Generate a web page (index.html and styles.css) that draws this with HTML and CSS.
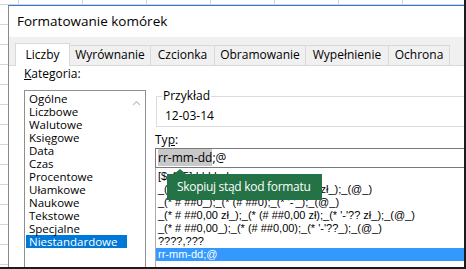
FILE: index.html
```html
<!DOCTYPE html>
<html lang="pl">
<head>
    <meta charset="UTF-8">
    <meta name="viewport" content="width=device-width, initial-scale=1.0">
    <title>Formatowanie komórek</title>
    <link rel="stylesheet" href="styles.css">
</head>
<body>
    <div class="screen">
        <div class="dialog">
            <div class="title">Formatowanie komórek</div>

            <!-- Zakładki -->
            <div class="tabs">
                <div class="tab tab-active tab-liczby">Liczby</div>
                <div class="tab tab-wyr">Wyrównanie</div>
                <div class="tab tab-czc">Czcionka</div>
                <div class="tab tab-obr">Obramowanie</div>
                <div class="tab tab-wyp">Wypełnienie</div>
                <div class="tab tab-och">Ochrona</div>
            </div>

            <div class="panel">
                <!-- Lista kategorii -->
                <div class="cat-col">
                    <div class="label"><u>K</u>ategoria:</div>
                    <div class="catlist">
                        <div class="cat-items">
                            <div class="cat">Ogólne</div>
                            <div class="cat">Liczbowe</div>
                            <div class="cat">Walutowe</div>
                            <div class="cat">Księgowe</div>
                            <div class="cat">Data</div>
                            <div class="cat">Czas</div>
                            <div class="cat">Procentowe</div>
                            <div class="cat">Ułamkowe</div>
                            <div class="cat">Naukowe</div>
                            <div class="cat">Tekstowe</div>
                            <div class="cat">Specjalne</div>
                            <div class="cat cat-selected">Niestandardowe</div>
                        </div>
                        <div class="scrollbar">
                            <svg class="scroll-up" width="9" height="6" viewBox="0 0 9 6">
                                <path d="M1 5 L4.5 1.5 L8 5" fill="none" stroke="#c2c2c2" stroke-width="1.2"/>
                            </svg>
                        </div>
                    </div>
                </div>

                <!-- Przykład, typ i lista formatów -->
                <div class="main-col">
                    <fieldset class="sample">
                        <legend>Przykład</legend>
                        <div class="sample-value">12-03-14</div>
                    </fieldset>
                    <div class="label label-typ">Ty<u>p</u>:</div>
                    <div class="type-input"><span class="text-sel">rr-mm-dd</span>;@</div>
                    <div class="fmt-list">
                        <div class="fmt">[$-415]dddd, d mmmm yyyy</div>
                        <div class="fmt">_(* # ##0 zł_);_(* (# ##0 zł);_(* '-' zł_);_(@_)</div>
                        <div class="fmt">_(* # ##0_);_(* (# ##0);_(* '-'_);_(@_)</div>
                        <div class="fmt">_(* # ##0,00 zł_);_(* (# ##0,00 zł);_(* '-'?? zł_);_(@_)</div>
                        <div class="fmt">_(* # ##0,00_);_(* (# ##0,00);_(* '-'??_);_(@_)</div>
                        <div class="fmt">????,???</div>
                        <div class="fmt fmt-selected">rr-mm-dd;@</div>

                        <!-- Podpowiedź -->
                        <div class="tip">Skopiuj stąd kod formatu</div>
                    </div>
                </div>
            </div>
        </div>
    </div>
</body>
</html>
```

FILE: styles.css
```css
/* Okno dialogowe Excela na tle arkusza */
body {
    margin: 0;
    padding: 0;
    font-family: "Open Sans", "Noto Sans", sans-serif;
    font-size: 12px;
    color: #000;
}
.screen {
    box-sizing: border-box;
    width: 466px;
    height: 269px;
    overflow: hidden;
    padding: 5px 0 0 8px;
    border-right: 2px solid #1c1c1c;
    border-bottom: 2px solid #1c1c1c;
    background-color: #fff;
    /* linie siatki arkusza */
    background-image:
        linear-gradient(to right, #d6d6d6 1px, transparent 1px),
        linear-gradient(to bottom, #d6d6d6 1px, transparent 1px);
    background-size: 64px 100%, 100% 20px;
    background-position: 18px 0, 0 4px;
}
.dialog {
    width: 520px;
    height: 300px;
    background-color: #fff;
    border-top: 1px solid #2b7bd6;
    border-left: 1px solid #8a8a8a;
}
.title {
    height: 31px;
    line-height: 31px;
    padding-left: 8px;
    font-size: 13.5px;
}

/* Zakładki */
.tabs {
    display: flex;
    align-items: flex-end;
    height: 29px;
    padding-left: 6px;
    background-color: #f0f0f0;
    border-bottom: 1px solid #d9d9d9;
    box-sizing: border-box;
}
.tab {
    box-sizing: border-box;
    height: 20px;
    line-height: 18px;
    text-align: center;
    border: 1px solid #d9d9d9;
    border-bottom: none;
    border-left: none;
    background-color: #f0f0f0;
}
.tab-active {
    height: 23px;
    line-height: 22px;
    background-color: #fff;
    border-left: 1px solid #d9d9d9;
    margin-bottom: -1px;
}
.tab-liczby { width: 55px; }
.tab-wyr { width: 81px; }
.tab-czc { width: 64px; }
.tab-obr { width: 91px; }
.tab-wyp { width: 83px; }
.tab-och { width: 61px; }

/* Zawartość */
.panel {
    display: flex;
    padding-left: 15px;
}
.label {
    height: 15px;
    line-height: 15px;
}
.cat-col {
    width: 122px;
}
.catlist {
    box-sizing: border-box;
    margin-top: 9px;
    width: 122px;
    height: 190px;
    border: 1px solid #8f8f8f;
    display: flex;
    padding: 1px 0 0 1px;
}
.cat-items {
    width: 101px;
}
.cat {
    height: 13px;
    line-height: 13px;
    padding-left: 3px;
    font-size: 11.5px;
}
.cat-selected {
    background-color: #0078d7;
    color: #fff;
}
.scrollbar {
    flex: 1;
    display: flex;
    justify-content: center;
    padding-top: 8px;
}
.scroll-up {
    display: block;
}

.main-col {
    flex: 1;
    margin-left: 9px;
}
.sample {
    margin: 23px 0 0 1px;
    padding: 0 0 3px 5px;
    border: 1px solid #dcdcdc;
}
.sample legend {
    padding: 0 1px;
    line-height: 14px;
}
.sample-value {
    height: 14px;
    line-height: 14px;
    margin: 6px 0 0 3px;
}
.label-typ {
    margin-top: 6px;
    height: 14px;
    line-height: 14px;
}
.type-input {
    box-sizing: border-box;
    height: 20px;
    margin-top: 1px;
    line-height: 18px;
    padding-left: 2px;
    border: 1px solid #7a7a7a;
}
.text-sel {
    background-color: #c8c8c8;
}

/* Lista kodów formatu */
.fmt-list {
    position: relative;
    height: 120px;
    border: 1px solid #abadb3;
    border-top: none;
    padding-top: 2px;
    font-family: "Liberation Sans", sans-serif;
    font-size: 11px;
}
.fmt {
    height: 13px;
    line-height: 13px;
    padding-left: 2px;
    white-space: nowrap;
}
.fmt-selected {
    background-color: #3399ff;
    color: #fff;
}

/* Zielona podpowiedź nad listą */
.tip {
    position: absolute;
    left: 11px;
    top: 6px;
    width: 155px;
    height: 26px;
    line-height: 26px;
    padding-left: 10px;
    box-sizing: border-box;
    background-color: #237346;
    color: #fff;
    font-family: "Open Sans", "Noto Sans", sans-serif;
    font-size: 12px;
    letter-spacing: -0.3px;
    white-space: nowrap;
}
.tip::before {
    content: "";
    position: absolute;
    left: 7px;
    top: -5px;
    border-left: 6px solid transparent;
    border-right: 6px solid transparent;
    border-bottom: 5px solid #237346;
}
```
